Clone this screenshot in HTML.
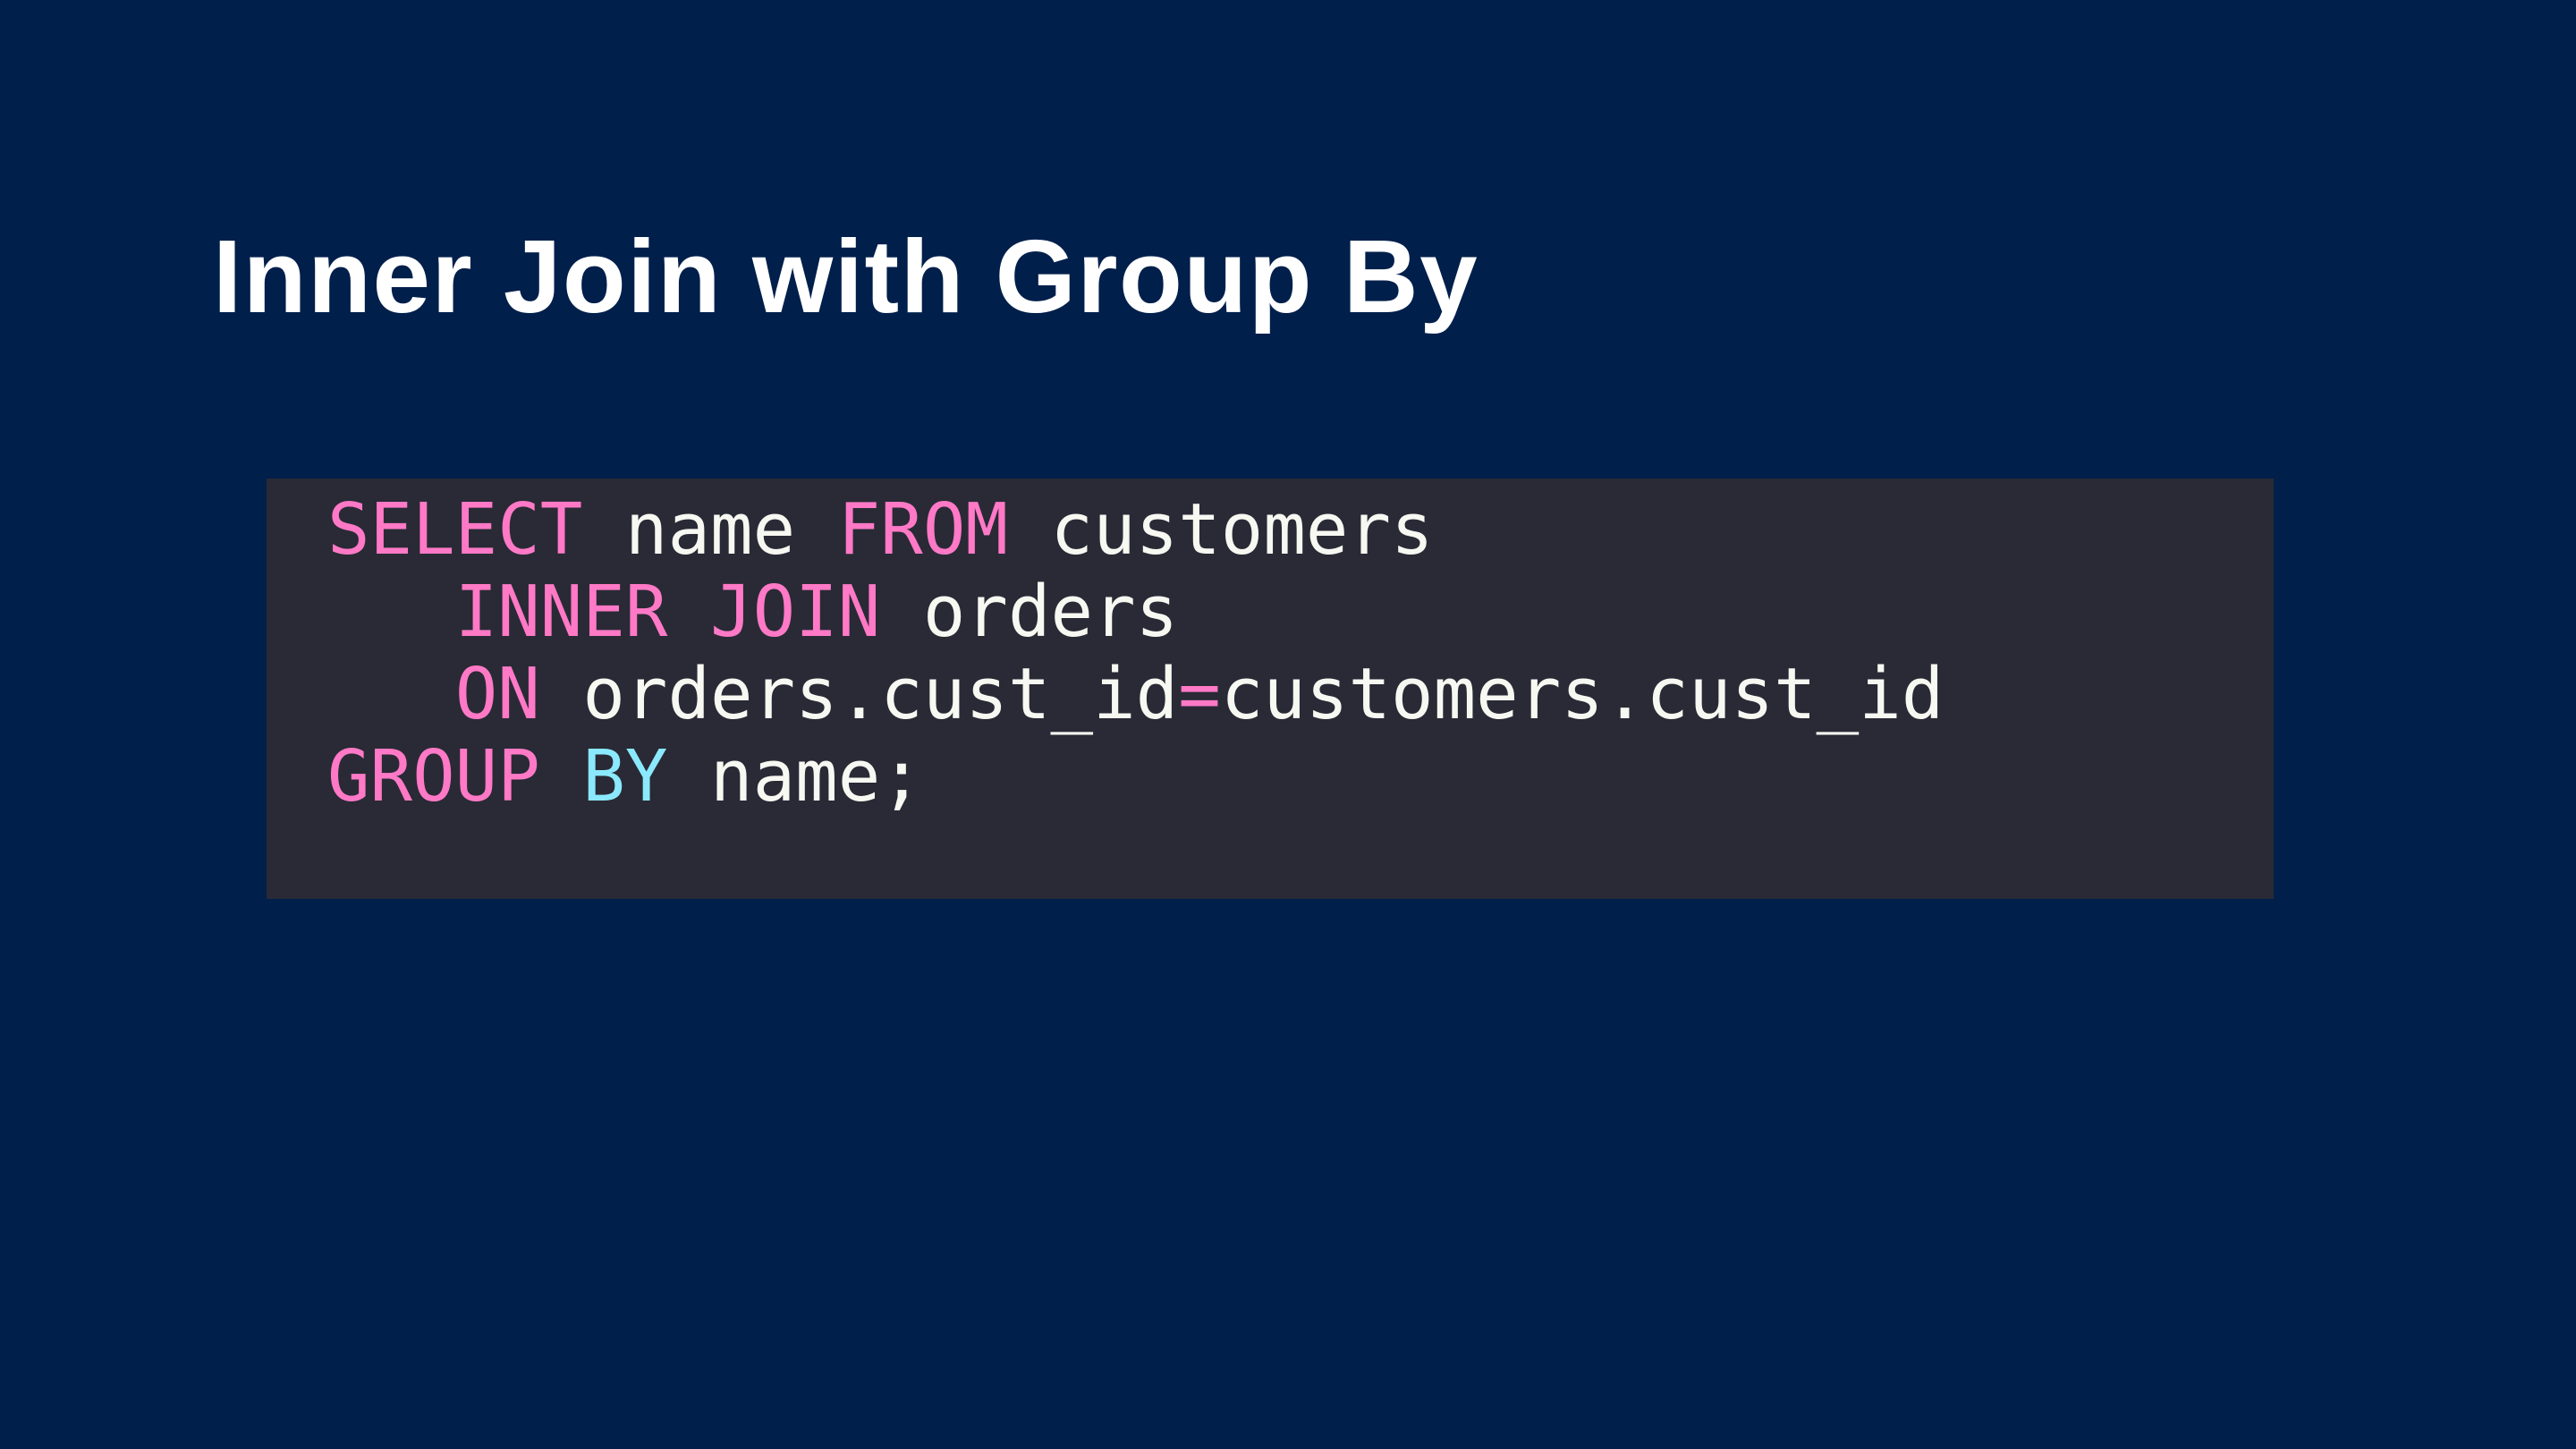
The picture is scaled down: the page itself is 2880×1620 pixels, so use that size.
<!DOCTYPE html>
<html><head><style>
html,body{margin:0;padding:0;}
body{width:2880px;height:1620px;background:#001f4b;position:relative;overflow:hidden;}
.t{position:absolute;left:238px;top:0;font-family:"Liberation Sans",sans-serif;font-weight:bold;font-size:116px;color:#fff;line-height:1;white-space:nowrap;letter-spacing:1.5px;}
.box{position:absolute;left:298px;top:535px;width:2244px;height:470px;background:#292a35;}
.c{position:absolute;left:366px;top:0;font-family:"DejaVu Sans Mono","Liberation Mono",monospace;font-size:79px;color:#f8f8f2;white-space:pre;line-height:92px;}
.k{color:#ff79c6}.b{color:#8be9fd}
</style></head><body>
<div class="t" style="top:251px">Inner Join with Group By</div>
<div class="box"></div>
<div class="c" style="top:546px"><span class="k">SELECT</span> name <span class="k">FROM</span> customers
   <span class="k">INNER JOIN</span> orders
   <span class="k">ON</span> orders.cust_id<span class="k">=</span>customers.cust_id
<span class="k">GROUP</span> <span class="b">BY</span> name;</div>
</body></html>
